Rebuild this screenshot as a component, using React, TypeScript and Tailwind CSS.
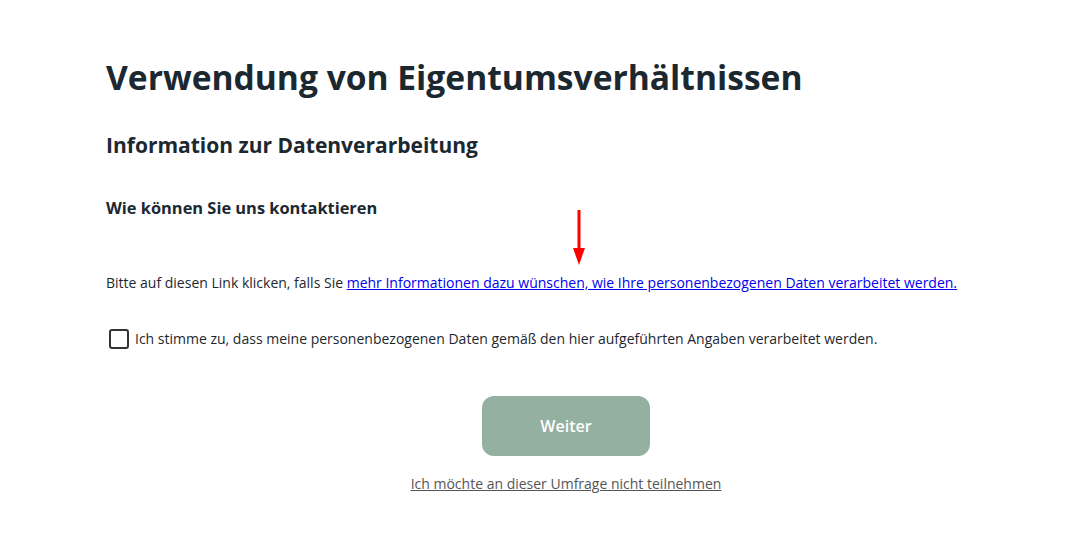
export default function App() {
  return (
    <div className="min-h-[536px] bg-white font-['Open_Sans',sans-serif] text-[#1c2830]">
      <div className="ml-[106px] w-[920px] pt-[55px]">
        <h1 className="text-[33.6px] font-bold leading-[44px]">Verwendung von Eigentumsverhältnissen</h1>
        <h2 className="mt-[31px] text-[21px] font-bold leading-[30px]">Information zur Datenverarbeitung</h2>
        <div className="relative">
          <h3 className="mt-[36px] text-[16.4px] font-bold leading-[24px]">Wie können Sie uns kontaktieren</h3>
          <svg className="absolute left-[465px] top-[14px]" width="16" height="56" viewBox="0 0 16 56">
            <line x1="8" y1="0" x2="8" y2="40" stroke="#ff0000" strokeWidth="3" />
            <polygon points="2,38 14,38 8,55" fill="#ff0000" />
          </svg>
        </div>
        <p className="mt-[52px] text-[14px] leading-[22px] text-[#1c2830]">
          Bitte auf diesen Link klicken, falls Sie{' '}
          <a href="#" className="text-[#0000ee] underline">
            mehr Informationen dazu wünschen, wie Ihre personenbezogenen Daten verarbeitet werden.
          </a>
        </p>
        <label className="mt-[34px] flex items-center gap-[6px] pl-[3px] text-[14px] leading-[22px]">
          <span className="block h-[20px] w-[20px] rounded-[3px] border-2 border-[#333]" />
          Ich stimme zu, dass meine personenbezogenen Daten gemäß den hier aufgeführten Angaben verarbeitet werden.
        </label>
        <div className="mt-[46px] flex flex-col items-center">
          <button className="h-[60px] w-[168px] rounded-[12px] bg-[#94b0a1] text-[16px] font-semibold text-white">
            Weiter
          </button>
          <a href="#" className="mt-[17px] text-[14px] leading-[22px] text-[#555] underline">
            Ich möchte an dieser Umfrage nicht teilnehmen
          </a>
        </div>
      </div>
    </div>
  )
}
